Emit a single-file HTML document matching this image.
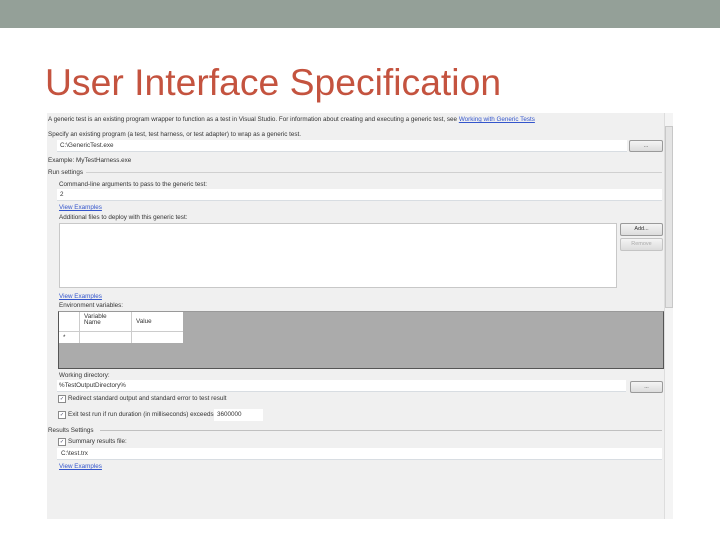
<!DOCTYPE html>
<html><head><style>
body{margin:0;width:720px;height:540px;background:#fff;position:relative;overflow:hidden;font-family:"Liberation Sans",sans-serif}
.a{position:absolute}
.t{position:absolute;font-size:6.3px;color:#333;white-space:nowrap;line-height:7px}
.l{color:#3355cc;text-decoration:underline}
.in{position:absolute;background:#fff;border-bottom:1px solid #d8dde2}
.bt{position:absolute;background:linear-gradient(#f4f4f4,#dcdcdc);border:1px solid #9a9a9a;border-radius:2px;font-size:5.5px;text-align:center;color:#333}
.cb{position:absolute;width:6px;height:6px;border:1px solid #8a8a8a;background:#fff;font-size:5px;line-height:6px;text-align:center;color:#335}
</style></head><body>
<div class="a" style="left:0;top:0;width:720px;height:28px;background:#94a098"></div>
<div class="a" style="left:45px;top:61px;font-size:37.3px;color:#c4533f;white-space:nowrap">User Interface Specification</div>
<div class="a" style="left:47px;top:113px;width:625px;height:406px;background:#f0f0f0"></div>
<div class="a" style="left:664px;top:113px;width:8px;height:406px;background:#f4f4f4;border-left:1px solid #ddd"></div>
<div class="a" style="left:665px;top:126px;width:6px;height:180px;background:#e4e4e4;border:1px solid #c8c8c8"></div>
<div class="t" style="left:48px;top:116px">A generic test is an existing program wrapper to function as a test in Visual Studio. For information about creating and executing a generic test, see <span class="l">Working with Generic Tests</span></div>
<div class="t" style="left:48px;top:131px">Specify an existing program (a test, test harness, or test adapter) to wrap as a generic test.</div>
<div class="in" style="left:57px;top:140px;width:570px;height:11px"></div>
<div class="t" style="left:60px;top:142px">C:\GenericTest.exe</div>
<div class="bt" style="left:629px;top:140px;width:32px;height:10px;line-height:10px">...</div>
<div class="t" style="left:48px;top:157px">Example: MyTestHarness.exe</div>
<div class="t" style="left:48px;top:169px">Run settings</div>
<div class="a" style="left:86px;top:172px;width:576px;height:1px;background:#d0d0d0"></div>
<div class="t" style="left:59px;top:181px">Command-line arguments to pass to the generic test:</div>
<div class="in" style="left:57px;top:189px;width:605px;height:11px"></div>
<div class="t" style="left:60px;top:191px">2</div>
<div class="t l" style="left:59px;top:204px">View Examples</div>
<div class="t" style="left:59px;top:214px">Additional files to deploy with this generic test:</div>
<div class="a" style="left:59px;top:223px;width:556px;height:63px;background:#fff;border:1px solid #c8c8c8"></div>
<div class="bt" style="left:620px;top:223px;width:41px;height:11px;line-height:11px">Add...</div>
<div class="bt" style="left:620px;top:238px;width:41px;height:11px;line-height:11px;color:#aaa;border-color:#c4c4c4">Remove</div>
<div class="t l" style="left:59px;top:293px">View Examples</div>
<div class="t" style="left:59px;top:302px">Environment variables:</div>
<div class="a" style="left:58px;top:311px;width:604px;height:56px;background:#ababab;border:1px solid #555;border-top-color:#999"></div>
<div class="a" style="left:59px;top:312px;width:124px;height:31px;background:#fff"></div>
<div class="a" style="left:79px;top:312px;width:1px;height:31px;background:#ccc"></div>
<div class="a" style="left:131px;top:312px;width:1px;height:31px;background:#ccc"></div>
<div class="a" style="left:59px;top:331px;width:124px;height:1px;background:#ccc"></div>
<div class="t" style="left:84px;top:314px;line-height:6px">Variable<br>Name</div>
<div class="t" style="left:136px;top:318px">Value</div>
<div class="t" style="left:63px;top:334px">*</div>
<div class="t" style="left:59px;top:372px">Working directory:</div>
<div class="in" style="left:57px;top:380px;width:569px;height:11px"></div>
<div class="t" style="left:59px;top:382px">%TestOutputDirectory%</div>
<div class="bt" style="left:630px;top:381px;width:31px;height:10px;line-height:10px">...</div>
<div class="cb" style="left:58px;top:395px">✓</div>
<div class="t" style="left:68px;top:395px">Redirect standard output and standard error to test result</div>
<div class="cb" style="left:58px;top:411px">✓</div>
<div class="t" style="left:68px;top:411px">Exit test run if run duration (in milliseconds) exceeds</div>
<div class="a" style="left:214px;top:409px;width:49px;height:12px;background:#fff"></div>
<div class="t" style="left:217px;top:411px">3600000</div>
<div class="t" style="left:48px;top:427px">Results Settings</div>
<div class="a" style="left:100px;top:430px;width:562px;height:1px;background:#c0c0c0"></div>
<div class="cb" style="left:58px;top:438px">✓</div>
<div class="t" style="left:68px;top:438px">Summary results file:</div>
<div class="in" style="left:57px;top:448px;width:605px;height:11px"></div>
<div class="t" style="left:61px;top:450px">C:\test.trx</div>
<div class="t l" style="left:59px;top:463px">View Examples</div>
</body></html>
